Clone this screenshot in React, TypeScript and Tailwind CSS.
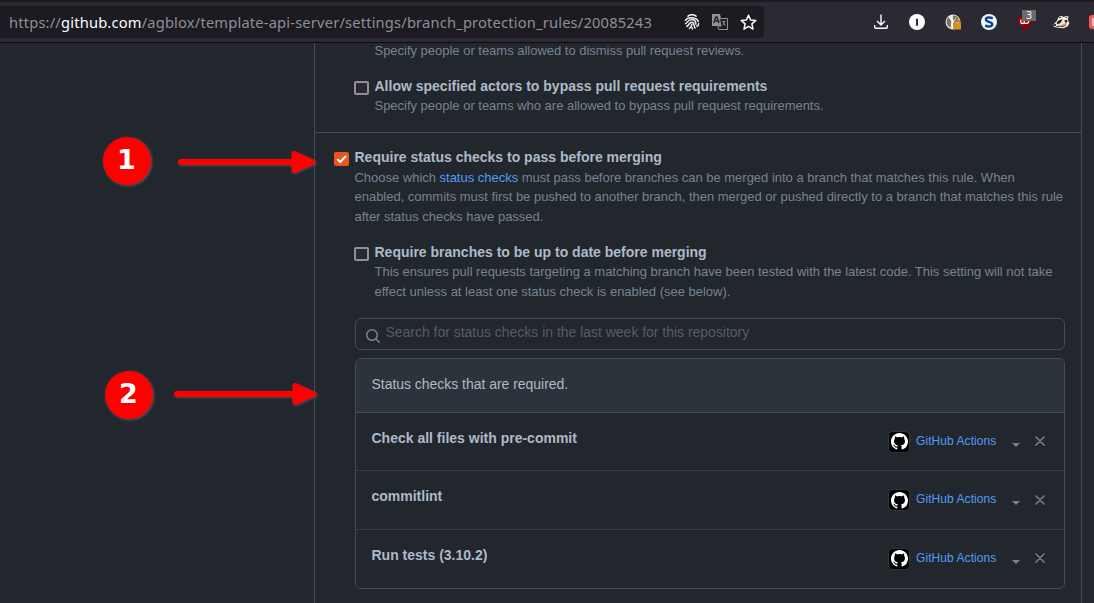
import type { ReactNode } from 'react';

const checks = ['Check all files with pre-commit', 'commitlint', 'Run tests (3.10.2)'];

function GitHubMark() {
  return (
    <span className="flex h-5 w-5 items-center justify-center rounded bg-black ring-1 ring-[#30363e]">
      <svg width="17" height="17" viewBox="0 0 16 16" fill="#fff">
        <path d="M8 0C3.58 0 0 3.58 0 8c0 3.54 2.29 6.53 5.47 7.59.4.07.55-.17.55-.38 0-.19-.01-.82-.01-1.49-2.01.37-2.53-.49-2.69-.94-.09-.23-.48-.94-.82-1.13-.28-.15-.68-.52-.01-.53.63-.01 1.08.58 1.23.82.72 1.21 1.87.87 2.33.66.07-.52.28-.87.51-1.07-1.78-.2-3.64-.89-3.64-3.95 0-.87.31-1.59.82-2.15-.08-.2-.36-1.02.08-2.12 0 0 .67-.21 2.2.82.64-.18 1.32-.27 2-.27s1.36.09 2 .27c1.53-1.04 2.2-.82 2.2-.82.44 1.1.16 1.92.08 2.12.51.56.82 1.27.82 2.15 0 3.07-1.87 3.75-3.65 3.95.29.25.54.73.54 1.48 0 1.07-.01 1.93-.01 2.2 0 .21.15.46.55.38A8.01 8.01 0 0 0 16 8c0-4.42-3.58-8-8-8Z" />
      </svg>
    </span>
  );
}

function Checkbox({ checked = false }: { checked?: boolean }) {
  return checked ? (
    <span className="flex h-[14px] w-[15px] shrink-0 items-center justify-center rounded-[2px] bg-[#e95420]">
      <svg width="15" height="14" viewBox="0 0 15 14" fill="none" stroke="#fff" strokeWidth="2">
        <path d="M3.2 7.1 6.2 10 12 4" />
      </svg>
    </span>
  ) : (
    <span className="block h-[14px] w-[15px] shrink-0 rounded-[2px] border-2 border-[#8f8f9d] bg-[#2b2a33]" />
  );
}

function Title({ children, className = 'h-[20px]' }: { children: ReactNode; className?: string }) {
  return <div className={`text-sm leading-[21px] font-bold whitespace-nowrap text-[#adbac7] ${className}`}>{children}</div>;
}

function Desc({ children }: { children: ReactNode }) {
  return <div className="text-[13px] leading-[19.5px] tracking-[-0.015px] whitespace-nowrap text-[#768390]">{children}</div>;
}

function BrowserBar() {
  return (
    <header className="flex h-[43px] border-t-2 border-b border-t-[#1c1b22] border-b-[#0c0c0d] bg-[#2b2a33] pt-1">
      <div className="flex h-8 w-[764px] shrink-0 items-center rounded-r bg-[#1c1b22] pl-[9px]">
        <div className="w-[675px] font-['Noto_Sans',sans-serif] text-[14.67px] tracking-[0.188px] whitespace-nowrap text-[#8f8f94]">
          https://<span className="text-[#fbfbfe]">github.com</span>/agblox/template-api-server/settings/branch_protection_rules/20085243
        </div>
        <svg width="16" height="16" viewBox="0 0 16 16" fill="none" stroke="#f0f0f4" strokeWidth="1.5" strokeLinecap="round">
          <path d="M4 2.200a6.500 6.500 0 0 1 8 0M1.400 6.300C3.600 2.600 12.400 2.600 14.300 7.600M1.600 9.700C3.500 8.500 4 5.600 7.800 5.600c3.200 0 4 2.400 4.100 4.600M14.600 9.800c0 1.500-.6 2.300-1.700 2.500M2.800 12.500c2.400-1.300 2.300-4.300 5-4.300 2.900 0 1.400 3.800 3.400 5.800M5.400 14.400c1.900-1.100 2.300-2.300 2.400-3.800M8.300 15v-1.300" />
        </svg>
        <svg className="ml-3" width="16" height="16" viewBox="0 0 16 16">
          <path d="M0 0h8l2.5 12H0z" fill="#929297" />
          <path d="M8.5 4.5h7v11H6.8l-1.200-3" fill="#1c1b22" stroke="#929297" />
          <path d="M5.6 12.5h4L8.1 5z" fill="#929297" />
          <path d="m1.8 9 2-6h1.100l2 6M2.500 7h3.700" fill="none" stroke="#25242b" strokeWidth="1.5" />
          <path d="M10.4 7.700h3M12 6.500v1.200c1 2-1.200 3-1.200 3.700M10.900 8.700l2.600 2.800" fill="none" stroke="#929297" />
        </svg>
        <svg className="ml-3" width="17" height="17" viewBox="0 0 17 17" fill="none" stroke="#fbfbfe" strokeWidth="1.5" strokeLinejoin="round">
          <path d="m8.500 1.200 2.100 4.700 5.200.5-3.900 3.500 1.100 5.200-4.500-2.700L4 15.100l1.100-5.200-3.900-3.500 5.200-.5z" />
        </svg>
      </div>
      <div className="flex h-8 grow items-center overflow-hidden pl-[109px]">
        <svg className="shrink-0" width="16" height="16" viewBox="0 0 16 16" fill="none" stroke="#fbfbfe" strokeWidth="1.4">
          <path d="M8 .5v10.200M4 7l4 4 4-4M1.700 11v2.300q0 .9.900.9h10.800q.9 0 .9-.9V11" />
        </svg>
        <svg className="ml-5 shrink-0" width="16" height="16" viewBox="0 0 16 16">
          <circle cx="8" cy="8" r="8" fill="#fbfbfe" />
          <path d="M7 4.700h2v7H7z" fill="#2b2a33" />
        </svg>
        <svg className="ml-5 shrink-0" width="16" height="16" viewBox="0 0 16 16">
          <circle cx="8" cy="8" r="7.500" fill="#e9e7e2" />
          <path d="m3.300 3 3 4-.8 7C2 12 0 7 3.300 3M8 1.500c4-.5 6.600 3.200 6 6L9 9 8 5z" fill="#77736b" />
          <path d="m4 2 4 5 4-5-3.500 6v7H7V8z" fill="#fff" />
          <path d="M10 9V7.600a2.200 2.200 0 0 1 4.400 0V9" fill="none" stroke="#c48b38" strokeWidth="1.400" />
          <rect x="8" y="8.600" width="8" height="7" rx=".6" fill="#d68f21" />
        </svg>
        <svg className="ml-5 shrink-0" width="16" height="16" viewBox="0 0 16 16">
          <circle cx="8" cy="8" r="8" fill="#f4f6fa" />
          <path d="M11.800 4.500C9.500 3 4.900 2.900 4.900 5.400c0 3.100 6.400 1.700 6.400 4.900 0 2.600-4.400 2.700-7.100 1.100" fill="none" stroke="#0b4597" strokeWidth="2.400" />
        </svg>
        <span className="relative ml-5 h-4 w-4 shrink-0">
          <svg width="16" height="16" viewBox="0 0 16 16">
            <path d="M8 0c2 1.500 4 2 7 2.200 0 6-.8 10-7 13.800C1.800 12.200 1 8.200 1 2.200 4 2 6 1.500 8 0" fill="#8c0009" />
            <path d="M3.800 5.500v2.700c0 1.700 3.400 1.700 3.400 0V5.500m0 2.700c0 1.800 4.600 1.600 4.600-.9 0-2-2.800-2.200-3.400-.8" fill="none" stroke="#fff" strokeWidth="1.300" />
          </svg>
          <span className="absolute -top-[4px] left-[5px] flex h-[11px] w-[14px] items-center justify-center bg-[#6a6a6d] font-['Noto_Sans',sans-serif] text-[10px] leading-[11px] text-white">3</span>
        </span>
        <svg className="ml-5 shrink-0" width="17" height="16" viewBox="0 0 17 16">
          <path d="M.3 10.500 4 6.800l1.600-3.900 2.800-1.200 2.300 1.400 2.900-1.300 2 1-.8 2.700 1.600 3.800-1.600 3-4.200 1.900-5.800-.4-4-1z" fill="#f2e9df" />
          <path d="M3.600 8.800c1.700-2.300 3.800-3.400 6.100-3.200L7.500 8.900l-3.200 1.300zM11.200 6.400l2.500-.6 1 2.200-2.200.7z" fill="#252126" />
          <path d="m6.300 3.900 1.800-.6M12.700 3.500l1.300-.1M3.700 12.500l3.500-.4 2.700.5 3-1.500" fill="none" stroke="#252126" strokeWidth="1" />
          <path d="m8 11 3.500-1.700 2.600-.2-1.600 2.200-3 .9z" fill="#d4a06d" />
          <circle cx="1.800" cy="10.900" r="1.200" fill="#252126" />
        </svg>
        <svg className="ml-[19px] shrink-0" width="16" height="16" viewBox="0 0 16 16">
          <rect y="1" width="16" height="14" rx="3" fill="#ed5962" />
          <path d="M3 4h10v8H3z" fill="#f5b3b5" />
        </svg>
      </div>
    </header>
  );
}

function CheckRow({ name, last }: { name: string; last: boolean }) {
  return (
    <div className={`flex pl-[15.5px] ${last ? 'h-[59px]' : 'h-[58.5px] border-b border-[#373e47]'}`}>
      <div className="w-[517.5px] pt-[15px] text-sm leading-[21px] font-bold text-[#adbac7]">{name}</div>
      <div className="mt-[19px] flex h-5 items-center">
        <GitHubMark />
        <span className="ml-[7px] -translate-y-px text-xs tracking-[0.07px] whitespace-nowrap text-[#539bf5]">GitHub Actions</span>
        <svg className="mt-[6px] ml-[16px]" width="8" height="4" viewBox="0 0 8 4" fill="#768390">
          <path d="M0 0h8L4 4z" />
        </svg>
        <svg className="-mt-px ml-[15px]" width="10" height="10" viewBox="0 0 10 10" fill="none" stroke="#768390" strokeWidth="1.500" strokeLinecap="round">
          <path d="m1 1 8 8M9 1 1 9" />
        </svg>
      </div>
    </div>
  );
}

function Callout({ label, circle, arrow, arrowWidth }: { label: string; circle: string; arrow: string; arrowWidth: number }) {
  return (
    <>
      <div className={`absolute flex h-12 w-12 items-center justify-center rounded-full bg-[#ff0000] font-['DejaVu_Sans',sans-serif] text-[27px] font-bold text-white shadow-[1px_1px_3px_#56595d] ${circle}`}>
        {label}
      </div>
      <svg className={`absolute drop-shadow-[1px_1px_1px_#4b4e52] ${arrow}`} width={arrowWidth} height="24" viewBox={`0 0 ${arrowWidth} 24`} fill="#f00" stroke="#f00" strokeLinejoin="round" strokeLinecap="round">
        <path d={`M3 12H${arrowWidth - 20}`} strokeWidth="6" />
        <path d={`M${arrowWidth - 22} 3.500V20.500L${arrowWidth - 3} 12Z`} strokeWidth="5" />
      </svg>
    </>
  );
}

export default function App() {
  return (
    <div className="relative h-[603px] w-[1094px] overflow-hidden bg-[#22272e] font-['Liberation_Sans',Arial,sans-serif]">
      <BrowserBar />
      <main className="ml-[314px] h-[562px] w-[768px] border-x border-[#444c56]">
        <section className="flex h-[90px] flex-col border-b border-[#444c56] pl-[39px]">
          <div className="-mt-[2px] ml-[20.5px]"><Desc>Specify people or teams allowed to dismiss pull request reviews.</Desc></div>
          <div className="mt-[15px] flex gap-[5.5px]">
            <div className="pt-[5px]"><Checkbox /></div>
            <div>
              <Title>Allow specified actors to bypass pull request requirements</Title>
              <Desc>Specify people or teams who are allowed to bypass pull request requirements.</Desc>
            </div>
          </div>
          <div className="-mb-px grow" />
        </section>
        <section className="pt-[14px] pl-[19px]">
          <div className="flex gap-[5.5px]">
            <div className="pt-[5px]"><Checkbox checked /></div>
            <div>
              <Title className="h-[20.5px]">Require status checks to pass before merging</Title>
              <Desc>
                Choose which <span className="text-[#539bf5]">status checks</span> must pass before branches can be merged into a branch that matches this rule. When
                <br />enabled, commits must first be pushed to another branch, then merged or pushed directly to a branch that matches this rule
                <br />after status checks have passed.
              </Desc>
            </div>
          </div>
          <div className="mt-[15.5px] ml-[20px] flex gap-[5.5px]">
            <div className="pt-[5px]"><Checkbox /></div>
            <div>
              <Title className="h-[20.5px]">Require branches to be up to date before merging</Title>
              <Desc>
                This ensures pull requests targeting a matching branch have been tested with the latest code. This setting will not take
                <br />effect unless at least one status check is enabled (see below).
              </Desc>
            </div>
          </div>
          <div className="mt-[16.5px] ml-[21px] flex h-8 w-[710px] rounded-md border border-[#444c56] pl-[9px]">
            <svg className="mt-[9px]" width="16" height="16" viewBox="0 0 16 16" fill="#768390">
              <path fillRule="evenodd" d="M11.500 7a4.500 4.500 0 1 1-9 0 4.500 4.500 0 0 1 9 0Zm-.82 4.740a6 6 0 1 1 1.060-1.060l3.040 3.040a.75.75 0 1 1-1.060 1.060Z" />
            </svg>
            <span className="ml-[4.5px] text-sm leading-[27px] tracking-[-0.02px] text-[#545d68]">Search for status checks in the last week for this repository</span>
          </div>
          <div className="mt-2 ml-[21px] h-[231px] w-[710px] overflow-hidden rounded-md border border-[#444c56]">
            <div className="h-[54px] border-b border-[#444c56] bg-[#2d333b] pt-[15px] pl-[15.5px] text-sm leading-[21px] tracking-[-0.03px] text-[#adbac7]">Status checks that are required.</div>
            {checks.map((name, i) => <CheckRow key={name} name={name} last={i === checks.length - 1} />)}
          </div>
        </section>
      </main>
      <Callout label="1" circle="left-[102.5px] top-[136.5px]" arrow="left-[178px] top-[150px]" arrowWidth={138} />
      <Callout label="2" circle="left-[104.5px] top-[370.5px]" arrow="left-[174px] top-[382px]" arrowWidth={143} />
    </div>
  );
}
